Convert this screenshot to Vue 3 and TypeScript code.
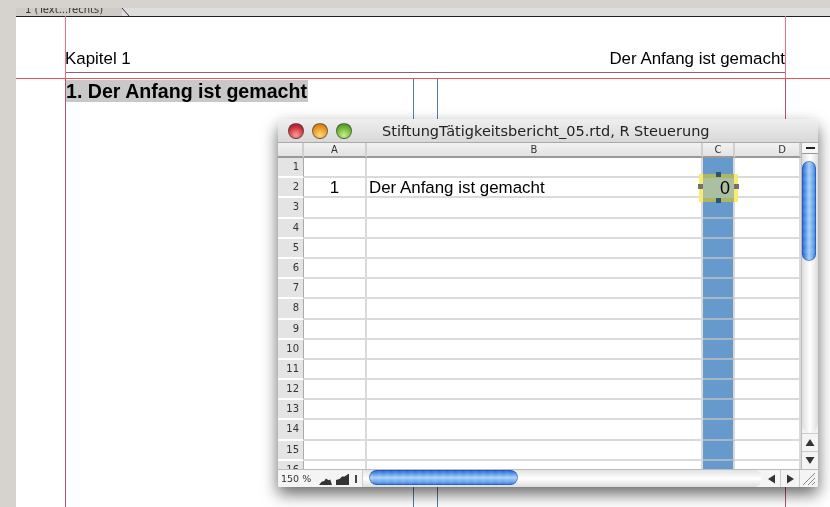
<template>
  <div class="screen">
    <div class="tabbar">
      <div class="tab">1 (Text...rechts)</div>
      <svg class="tab-edge" width="12" height="8" viewBox="0 0 12 8"><path d="M1 0 L8 8" stroke="#333" stroke-width="1" fill="none" /></svg>
    </div>
    <div class="page">
      <div class="running-head">
        <span>Kapitel 1</span>
        <span>Der Anfang ist gemacht</span>
      </div>
      <h1 class="heading"><span>1. Der Anfang ist gemacht</span></h1>
    </div>

    <!-- guides lie over the page -->
    <i class="guide v pink" style="left: 65px"></i>
    <i class="guide v pink" style="left: 785px"></i>
    <i class="guide v blue" style="left: 413px"></i>
    <i class="guide v blue" style="left: 437px"></i>
    <i class="guide h red"></i>

    <div class="window">
      <div class="titlebar">
        <span class="light red-l"></span>
        <span class="light orange-l"></span>
        <span class="light green-l"></span>
        <span class="title">StiftungTätigkeitsbericht_05.rtd, R Steuerung</span>
      </div>
      <div class="body">
        <div class="sheet">
          <div class="corner"></div>
          <div v-for="col in columns" :key="col.name" class="col-head" :class="col.cls">{{ col.name }}</div>
          <template v-for="row in rows" :key="row">
            <div class="row-head">{{ row }}</div>
            <div class="cell num">{{ row === 2 ? '1' : '' }}</div>
            <div class="cell text">{{ row === 2 ? 'Der Anfang ist gemacht' : '' }}</div>
            <div class="cell picked">
              <div v-if="row === 2" class="selection">
                <span class="value">0</span>
                <i class="handle top"></i>
                <i class="handle bottom"></i>
                <i class="handle left"></i>
                <i class="handle right"></i>
              </div>
            </div>
            <div class="cell"></div>
          </template>
        </div>
        <div class="vbar">
          <div class="split-box"><b></b></div>
          <div class="vtrack"><div class="vthumb"></div></div>
          <div class="varrow">
            <svg width="10" height="9" viewBox="0 0 10 9"><path d="M5 1 L9.5 8 L.5 8 Z" fill="#333" /></svg>
          </div>
          <div class="varrow">
            <svg width="10" height="9" viewBox="0 0 10 9"><path d="M.5 1 L9.5 1 L5 8 Z" fill="#333" /></svg>
          </div>
        </div>
      </div>
      <div class="statusbar">
        <span class="zoom">150 %</span>
        <svg class="mount" width="13" height="8" viewBox="0 0 15 10" preserveAspectRatio="none"><path d="M0 10 L3 6 L6 5 L8 2 L11 4 L13 3 L15 10 Z" fill="#333" /></svg>
        <svg class="mount" width="13" height="11" viewBox="0 0 15 13" preserveAspectRatio="none"><path d="M0 13 L0 7 L4 6 L7 3 L10 3 L14 0 L15 0 L15 13 Z" fill="#333" /></svg>
        <span class="divider"><b></b></span>
        <div class="htrack"><div class="hthumb"></div></div>
        <div class="harrow">
          <svg width="9" height="10" viewBox="0 0 9 10"><path d="M1 5 L8 .5 L8 9.5 Z" fill="#333" /></svg>
        </div>
        <div class="harrow">
          <svg width="9" height="10" viewBox="0 0 9 10"><path d="M1 .5 L8 5 L1 9.5 Z" fill="#333" /></svg>
        </div>
        <div class="grip">
          <svg width="14" height="14" viewBox="0 0 14 14"><path d="M1 13 L13 1 M6 13 L13 6 M10 13 L13 10" stroke="#888" stroke-width="1" fill="none" /></svg>
        </div>
      </div>
    </div>
  </div>
</template>

<script setup lang="ts">
interface Column {
  name: string
  cls: string
}

const columns: Column[] = [
  { name: 'A', cls: '' },
  { name: 'B', cls: '' },
  { name: 'C', cls: 'col-c' },
  { name: 'D', cls: 'col-d' }
]

const rows: number[] = Array.from({ length: 16 }, (_, i) => i + 1)
</script>

<style>
html,
body {
  margin: 0;
  background: #d6d2cd;
}
</style>

<style scoped>
.screen {
  position: relative;
  width: 830px;
  height: 507px;
  overflow: hidden;
  padding-top: 8px;
  box-sizing: border-box;
  background: #d6d2cd;
  font-family: "Liberation Sans", Arial, sans-serif;
  color: #000;
  filter: blur(0.4px);
}

.tabbar {
  display: flex;
  align-items: flex-end;
  height: 8px;
  margin-left: 16px;
  background: #dedede;
  border-bottom: 1px solid #222;
  overflow: hidden;
}

.tab {
  width: 106px;
  height: 8px;
  padding-left: 9px;
  box-sizing: border-box;
  background: #cfcbc6;
  font-size: 10px;
  line-height: 3px;
  color: #333;
  font-family: "DejaVu Sans", sans-serif;
  white-space: nowrap;
}

.tab-edge {
  margin-left: -1px;
}

.page {
  height: 491px;
  margin-left: 16px;
  background: #fff;
}

.running-head {
  display: flex;
  justify-content: space-between;
  width: 720px;
  height: 56px;
  margin-left: 49px;
  padding-top: 32px;
  box-sizing: border-box;
  font-size: 16.9px;
  line-height: 19px;
  border-bottom: 1px solid #8f5f7c;
}

.heading {
  margin: 7px 0 0 50px;
  font-size: 19.6px;
  line-height: 22px;
  font-weight: 700;
}

.heading span {
  display: inline-block;
  width: 242px;
  background: #c8c8c8;
  white-space: nowrap;
}

.guide {
  position: absolute;
  display: block;
}

.guide.v {
  top: 16px;
  bottom: 0;
  width: 1px;
}

.guide.pink {
  background: linear-gradient(#ee6f86 62px, #bc5078 62px);
}

.guide.blue {
  top: 78px;
  background: #557aac;
}

.guide.h {
  top: 78px;
  left: 16px;
  right: 0;
  height: 1px;
}

.guide.red {
  background: #f0505c;
}

.window {
  position: absolute;
  left: 278px;
  top: 119px;
  width: 540px;
  height: 368px;
  display: flex;
  flex-direction: column;
  border-radius: 8px 8px 2px 2px;
  background: #fff;
  box-shadow: 0 7px 16px rgba(0, 0, 0, 0.6);
  overflow: hidden;
}

.titlebar {
  display: flex;
  align-items: center;
  gap: 8px;
  flex: none;
  height: 24px;
  padding-left: 10px;
  box-sizing: border-box;
  background: linear-gradient(#efefef, #d8d8d8);
  border-bottom: 1px solid #a8a8a8;
}

.light {
  width: 16px;
  height: 16px;
  border-radius: 50%;
  border: 1px solid rgba(60, 60, 60, 0.6);
  box-sizing: border-box;
}

.red-l {
  background: radial-gradient(circle at 50% 80%, #ff9a9a, #c92a35 65%, #8e2028);
}

.orange-l {
  background: radial-gradient(circle at 50% 80%, #ffd77e, #e5901c 65%, #b06a14);
}

.green-l {
  background: radial-gradient(circle at 50% 80%, #c5f08a, #68ad2e 65%, #437f1e);
}

.title {
  margin-left: 22px;
  font-family: "DejaVu Sans", sans-serif;
  font-size: 14.5px;
  color: #222;
  white-space: nowrap;
}

.body {
  display: flex;
  flex: 1;
  min-height: 0;
}

.sheet {
  display: grid;
  grid-template-columns: 26px 63px 336px 32px 66px;
  grid-template-rows: 15px repeat(16, 20.2px);
  width: 523px;
  overflow: hidden;
  font-size: 16.9px;
}

.corner,
.col-head {
  background: linear-gradient(#f2f2f2, #e2e2e2);
  border-right: 2px solid #cfcfcf;
  border-bottom: 2px solid #999;
  box-sizing: border-box;
}

.col-head {
  font-family: "DejaVu Sans", sans-serif;
  font-size: 10px;
  line-height: 13px;
  text-align: center;
  color: #333;
}

.col-d {
  padding-left: 30px;
}

.row-head {
  padding-right: 4px;
  background: #e4e4e4;
  border-right: 1px solid #aaa;
  border-bottom: 2px solid #fff;
  box-sizing: border-box;
  font-family: "DejaVu Sans", sans-serif;
  font-size: 10px;
  line-height: 18px;
  text-align: right;
  color: #333;
}

.cell {
  position: relative;
  border-right: 2px solid #dadada;
  border-bottom: 2px solid #dadada;
  box-sizing: border-box;
  line-height: 20px;
}

.num {
  text-align: center;
}

.text {
  padding-left: 2px;
  white-space: nowrap;
}

.picked {
  background: #6699cc;
  border-bottom-color: #a8b6c6;
}

.selection {
  position: absolute;
  inset: -4px -5px -6px -4px;
  z-index: 1;
  box-sizing: border-box;
  border: 4px solid #f7ec70;
  background: #abc0a2;
  text-align: right;
  padding-right: 4px;
  font-size: 18px;
  line-height: 20px;
}

.selection::before,
.selection::after {
  content: "";
  position: absolute;
  left: 0;
  right: 0;
  height: 4px;
  background: #aeb664;
}

.selection::before {
  top: -4px;
}

.selection::after {
  bottom: -4px;
}

.handle {
  position: absolute;
  z-index: 2;
  width: 5px;
  height: 5px;
  background: #717171;
}

.handle.top {
  top: -6px;
  left: 13px;
  background: #2f5274;
}

.handle.bottom {
  bottom: -5px;
  left: 13px;
  background: #2f5274;
}

.handle.left {
  top: 6px;
  left: -5px;
}

.handle.right {
  top: 6px;
  right: -5px;
}

.vbar {
  display: flex;
  flex-direction: column;
  width: 17px;
  flex: none;
  background: #f4f4f4;
  border-left: 1px solid #bbb;
  box-sizing: border-box;
}

.split-box {
  display: flex;
  align-items: center;
  justify-content: center;
  height: 11px;
  flex: none;
  background: #f6f6f6;
  border-bottom: 1px solid #999;
  box-sizing: border-box;
}

.split-box b {
  width: 9px;
  height: 2px;
  background: #222;
}

.vtrack {
  flex: 1;
  padding: 7px 2px 0 0;
  background: linear-gradient(90deg, #ddd, #fff 50%, #ddd);
  border-radius: 0 0 8px 8px;
}

.vthumb {
  height: 100px;
  border-radius: 7px;
  background:
    repeating-linear-gradient(rgba(255, 255, 255, 0.06) 0 4px, transparent 4px 8px),
    linear-gradient(90deg, #1f5fd0, #4f90e8 22%, #a9d0f5 50%, #6ea8ec 78%, #2f6fe0);
  box-shadow: inset 0 0 0 1px rgba(30, 70, 160, 0.5);
}

.varrow {
  display: flex;
  align-items: center;
  justify-content: center;
  height: 18px;
  flex: none;
  border-top: 1px solid #ccc;
  box-sizing: border-box;
  background: #f4f4f4;
}

.statusbar {
  display: flex;
  align-items: center;
  flex: none;
  height: 18px;
  background: #f4f4f4;
  border-top: 1px solid #bbb;
  box-sizing: border-box;
}

.zoom {
  width: 37px;
  padding-left: 3px;
  box-sizing: border-box;
  font-family: "DejaVu Sans", sans-serif;
  font-size: 9.5px;
  color: #333;
  white-space: nowrap;
}

.mount {
  align-self: flex-end;
  margin: 0 0 2px 4px;
}

.divider {
  display: flex;
  align-items: center;
  justify-content: center;
  width: 14px;
  height: 100%;
  border-right: 1px solid #ccc;
  box-sizing: border-box;
}

.divider b {
  width: 2px;
  height: 8px;
  background: #444;
}

.htrack {
  flex: 1;
  height: 100%;
  padding: 0 0 2px 6px;
  box-sizing: border-box;
  background: linear-gradient(#e2e2e2, #fff 50%, #ddd);
  border-radius: 0 8px 8px 0;
}

.hthumb {
  width: 149px;
  height: 100%;
  border-radius: 8px;
  background:
    repeating-linear-gradient(90deg, rgba(255, 255, 255, 0.06) 0 4px, transparent 4px 8px),
    linear-gradient(#1f5fd0, #4f90e8 22%, #a9d0f5 50%, #6ea8ec 78%, #2f6fe0);
  box-shadow: inset 0 0 0 1px rgba(30, 70, 160, 0.5);
}

.harrow {
  display: flex;
  align-items: center;
  justify-content: center;
  flex: none;
  width: 19px;
  height: 100%;
  border-right: 1px solid #ccc;
  box-sizing: border-box;
}

.grip {
  display: flex;
  align-items: flex-end;
  justify-content: flex-end;
  flex: none;
  width: 18px;
  height: 100%;
  padding: 0 2px 1px 0;
  box-sizing: border-box;
}
</style>
